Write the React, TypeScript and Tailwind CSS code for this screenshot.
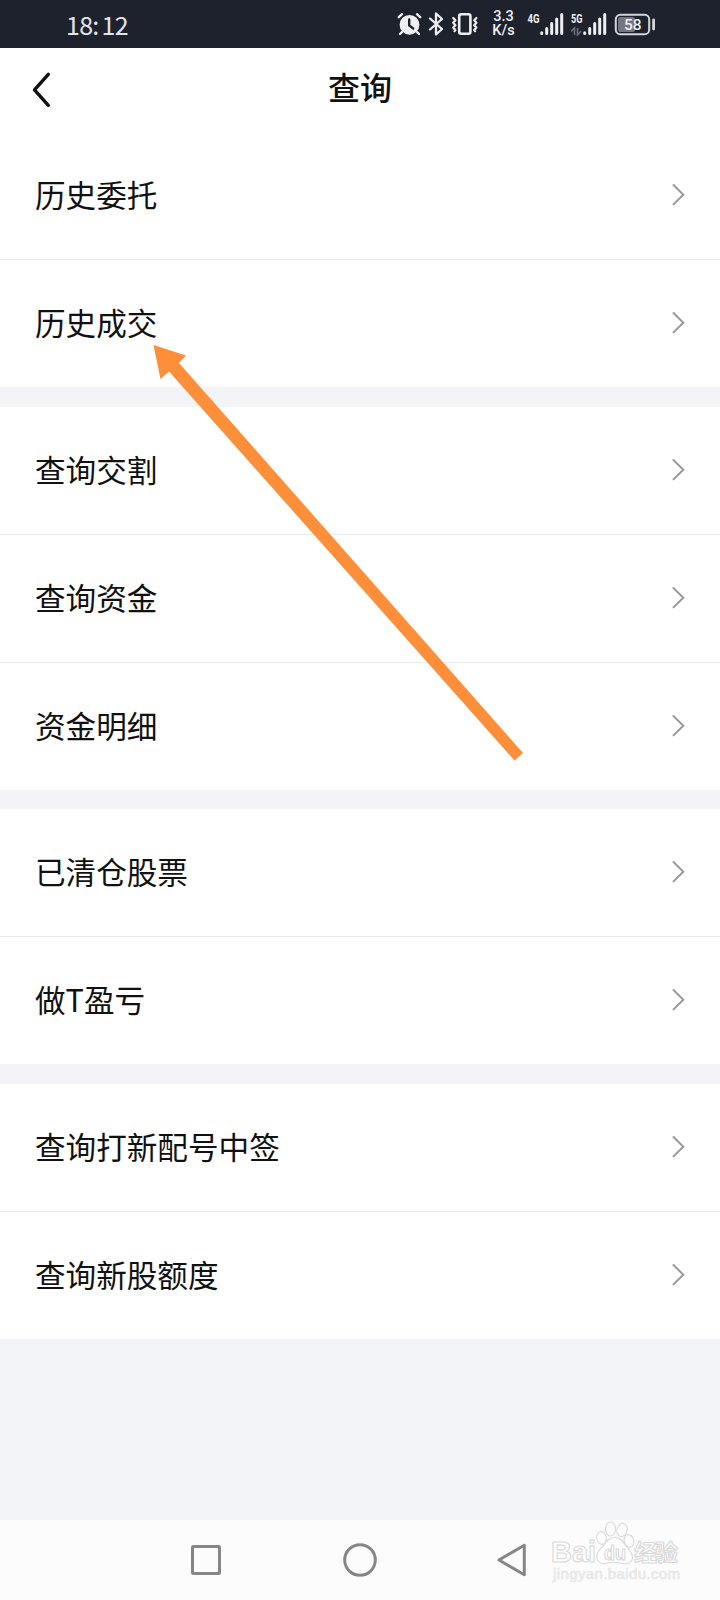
import React from "react";

const groups: string[][] = [
  ["历史委托", "历史成交"],
  ["查询交割", "查询资金", "资金明细"],
  ["已清仓股票", "做T盈亏"],
  ["查询打新配号中签", "查询新股额度"],
];

function Signal() {
  return (
    <svg width="24" height="24" viewBox="0 0 24 24" stroke="#eeeff1" strokeWidth="3" strokeLinecap="round">
      <path d="M1.7 20.7v.8M6.7 16.5v5M11.7 11.5v10M16.7 7v14.5M21.7 2.5v19" />
    </svg>
  );
}

function StatusBar() {
  return (
    <div className="flex h-12 items-center justify-between bg-[#1e222d] pl-[66px] pr-16 font-[Roboto,sans-serif] text-[#eeeff1]">
      <div className="font-['Noto_Sans_CJK_SC',sans-serif] text-[25px] leading-none tracking-[-0.7px] text-[#e3e4e7]">
        18:<span className="pl-[3px]">12</span>
      </div>
      <div className="flex items-center">
        <svg width="25" height="24" viewBox="0 0 25 24" fill="none" strokeLinecap="round">
          <circle cx="12.5" cy="12.8" r="9.9" fill="#eeeff1" />
          <path d="M1.8 5.2 5 2.2M23.2 5.2 20 2.2M5 20l-2 2M20 20l2 2" stroke="#eeeff1" strokeWidth="2.4" />
          <path d="M12.2 7.5v6l4 3" stroke="#1e222d" strokeWidth="2.4" />
        </svg>
        <svg className="ml-1.5" width="17" height="24" viewBox="0 0 17 24" fill="none" stroke="#eeeff1" strokeWidth="2.3" strokeLinecap="round" strokeLinejoin="round">
          <path d="M2 6.5 14 17l-6 5.5v-21L14 7 2 17.500" />
        </svg>
        <svg className="ml-1.5" width="28" height="24" viewBox="0 0 28 24" fill="none" stroke="#eeeff1" strokeLinecap="round" strokeLinejoin="round">
          <rect x="8.200" y="2.200" width="11.200" height="19.600" rx="2" strokeWidth="2.600" />
          <path d="M2.200 6 4.400 8.200 2.200 10.800l2.200 2.400-2.200 2.400L4.400 18l-1 1.200M25.400 6l-2.200 2.200 2.200 2.600-2.200 2.400 2.200 2.400-2.200 2.400 1 1.200" strokeWidth="2.200" />
        </svg>
        <div className="ml-1 flex w-[41px] flex-col items-center text-[14.5px] font-medium leading-[14px]">
          <span>3.3</span>
          <span>K/s</span>
        </div>
        <svg className="ml-[3px]" width="13" height="24" viewBox="0 0 13 24" fill="#eeeff1" fontFamily="Roboto, sans-serif" fontWeight="700" fontSize="12">
          <text x="0.500" y="11" textLength="12" lengthAdjust="spacingAndGlyphs">4G</text>
        </svg>
        <Signal />
        <svg className="ml-[7px]" width="12" height="24" viewBox="0 0 12 24" fill="#eeeff1" fontFamily="Roboto, sans-serif" fontWeight="700" fontSize="12">
          <text x="0" y="11" textLength="11.500" lengthAdjust="spacingAndGlyphs">5G</text>
          <path d="M0 19.500 3.500 16v7M6.500 16v7l3.500-4" fill="none" stroke="#6c6f78" strokeWidth="1.600" />
        </svg>
        <Signal />
        <svg className="ml-[7px]" width="42" height="23" viewBox="0 0 42 23" fill="none">
          <rect x="4" y="4" width="17" height="15" rx="2" fill="#747780" />
          <rect x="1.800" y="1.800" width="33.400" height="19.400" rx="4.500" stroke="#d5d6da" strokeWidth="2" />
          <path d="M39.600 7v9" stroke="#d5d6da" strokeWidth="2.800" strokeLinecap="round" />
          <text x="18.800" y="17" textAnchor="middle" fontFamily="Roboto, sans-serif" fontWeight="500" fontSize="15.500" fill="#eeeff1">58</text>
        </svg>
      </div>
    </div>
  );
}

function Row({ label }: { label: string }) {
  return (
    <li className="flex h-32 items-center justify-between border-b border-[#e9eaec] pl-[35px] pr-[35px] last:h-[127px] last:border-b-0">
      <span className="pb-1 text-[30.6px] leading-[44px]">{label}</span>
      <svg className="mb-px" width="13" height="24" viewBox="0 0 13 24" fill="none" stroke="#999" strokeWidth="2" strokeLinecap="round">
        <path d="m1.500 2 9.800 9.700-9.800 9.700" />
      </svg>
    </li>
  );
}

function Watermark() {
  return (
    <svg className="absolute right-[35px] top-0" width="135" height="80" viewBox="0 0 135 80" fill="#fdfdfd" stroke="#d9d9d9" strokeWidth="1.100">
      <text x="1" y="42" fontFamily="'Liberation Sans', sans-serif" fontWeight="700" fontSize="30" textLength="45" lengthAdjust="spacingAndGlyphs">Bai</text>
      <ellipse cx="51.500" cy="18" rx="4.800" ry="6.400" transform="rotate(-12 51.500 18)" />
      <ellipse cx="60.500" cy="9" rx="5" ry="7" />
      <ellipse cx="72" cy="10" rx="5" ry="6.800" transform="rotate(12 72 10)" />
      <ellipse cx="79" cy="21" rx="4.800" ry="6.400" transform="rotate(-15 79 21)" />
      <path d="M65 17.500c-6 0-9 4.500-12 8.500-4 4.500-7 7-6 12 1 5 5 6 9 5.500 5-1.200 11-1.200 16 0 5 1 10-.5 10.500-5.500 .4-4.500-3-7.500-6.500-12C73 22 71 17.500 65 17.500Z" />
      <text x="54" y="40" fontFamily="'Liberation Sans', sans-serif" fontWeight="700" fontSize="20" textLength="22" lengthAdjust="spacingAndGlyphs">du</text>
      <text x="84" y="41" fontFamily="'Noto Sans CJK SC', sans-serif" fontWeight="700" fontSize="23" textLength="44">经验</text>
      <text x="3" y="58.500" fontFamily="'Liberation Sans', sans-serif" fontSize="15" textLength="127" strokeWidth="0.700" stroke="#e6e6e6" fill="#f1f1f1">jingyan.baidu.com</text>
    </svg>
  );
}

export default function App() {
  return (
    <div className="relative flex h-[1600px] w-[720px] flex-col overflow-hidden bg-[#f3f4f8] font-['Noto_Sans_CJK_SC',sans-serif] text-[#111]">
      <StatusBar />
      <header className="grid h-[84px] grid-cols-[1fr_auto_1fr] items-center bg-white pb-2 pl-[31px] pr-[31px]">
        <svg className="mt-2" width="22" height="38" viewBox="0 0 22 38" fill="none" stroke="#111" strokeWidth="3.400" strokeLinecap="round" strokeLinejoin="round">
          <path d="M17.300 3.300 3.500 18.800l13.800 15.500" />
        </svg>
        <h1 className="text-[32px] font-medium leading-[46px]">查询</h1>
      </header>
      <main className="flex flex-col gap-5">
        {groups.map((group) => (
          <ul key={group[0]} className={group.length === 3 ? "-mb-px bg-white" : "bg-white"}>
            {group.map((label) => (
              <Row key={label} label={label} />
            ))}
          </ul>
        ))}
      </main>
      <nav className="relative mt-auto flex h-20 items-center bg-[#fcfcfc] pl-[190px]">
        <svg width="338" height="34" viewBox="190 23 338 34" fill="none" stroke="#868686" strokeWidth="3" strokeLinejoin="round">
          <rect x="192.500" y="26.500" width="27" height="27" rx="1" />
          <circle cx="360" cy="40" r="15.300" />
          <path d="M499 40 524.300 25.300v29.400Z" />
        </svg>
        <Watermark />
      </nav>
      <svg className="pointer-events-none absolute left-[150px] top-[340px]" width="380" height="430" viewBox="150 340 380 430" fill="#fd8f3b">
        <path d="M153.500 345 186 355.500 179 363 523 753 514.500 760.500 169 371.500 160.500 379Z" />
      </svg>
    </div>
  );
}
